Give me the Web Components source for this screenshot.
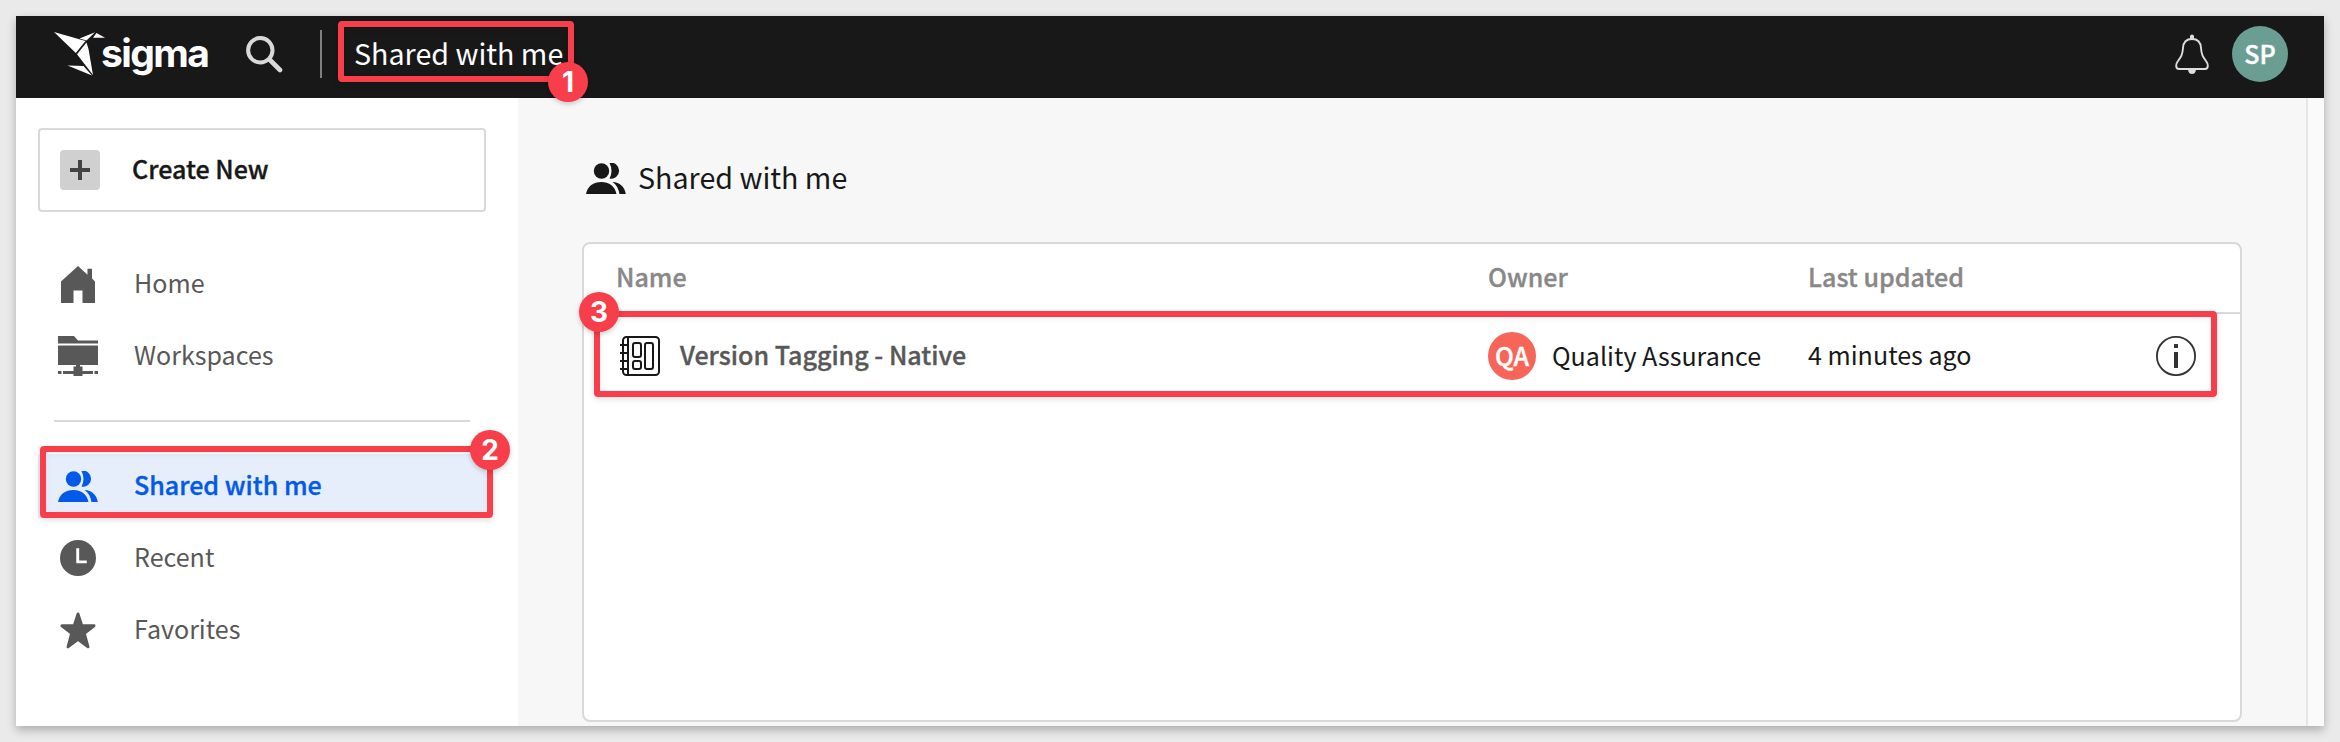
<!DOCTYPE html>
<html lang="en"><head><meta charset="utf-8"><title>Shared with me</title>
<style>
html,body{margin:0;height:100%;background:#eaeaea}
body{font-family:"Noto Sans CJK SC","Noto Sans",sans-serif;overflow:hidden}
</style></head><body>
<sigma-app></sigma-app>
<script>
const ICONS={
home:'<svg width="34" height="37" viewBox="0 0 34 37"><path fill="currentColor" d="M0 15.5 17 0 26.5 8.7V2.8H31V12.5L34 15.5V37H21.5V24.5H12.500V37H0Z"/></svg>',
folder:'<svg width="40" height="40" viewBox="0 0 40 40"><path fill="currentColor" d="M0 0H16L20 4.500H40V7.500H0ZM0 9.500H40V29H22V30.500H24.500V35H35V38H24.500V40H15.500V38H5V35H15.500V30.500H18V29H0ZM0 35H3.500V38H0ZM36.500 35H40V38H36.500Z"/></svg>',
people:'<svg width="40" height="31" viewBox="0 0 40 31"><circle cx="15.500" cy="8" r="7.700" fill="currentColor"/><path fill="currentColor" d="M23.500 0A7.700 8 0 1 1 23.500 15.500Q27.500 8 23.500 0ZM0 31C1.500 23 7.500 19 15.300 19S29 23 30.500 31ZM26.500 19C34 19.500 38.500 23.500 39.800 31H33.500C32.500 25.500 30.500 21.500 26.500 19Z"/></svg>',
clock:'<svg width="36" height="36" viewBox="0 0 37 37"><circle cx="18.500" cy="18.500" r="18.500" fill="currentColor"/><path d="M18.200 8.500V22.500H27.500" fill="none" stroke="#fff" stroke-width="3"/></svg>',
star:'<svg width="36" height="37" viewBox="0 0 37 38"><path fill="currentColor" stroke="currentColor" stroke-width="3" stroke-linejoin="round" d="M18.500 2 22.500 14.200H35L25 22 28.800 35.800 18.500 28 8.200 35.800 12 22 2 14.200H14.500Z"/></svg>',
book:'<svg width="40" height="40" viewBox="0 0 40 40" fill="none" stroke="currentColor" stroke-width="2"><rect x="3" y="1" width="36" height="38" rx="3.500"/><path d="M8 1V39M0 9H7M0 17H7M0 25H7M0 33H7"/><rect x="13" y="7" width="8" height="14" rx="2"/><rect x="13" y="25" width="8" height="8" rx="2"/><rect x="25" y="7" width="8" height="26" rx="2"/></svg>',
info:'<svg width="40" height="40" viewBox="0 0 40 40"><circle cx="20" cy="20" r="19.100" fill="none" stroke="currentColor" stroke-width="1.800"/><path fill="currentColor" d="M18 8H22V12H18ZM18 16H22V32H18Z"/></svg>',
plus:'<svg width="20" height="20" viewBox="0 0 20 20"><path d="M10 0V20M0 10H20" stroke="currentColor" stroke-width="4"/></svg>',
search:'<svg width="37" height="37" viewBox="0 0 37 37" fill="none" stroke="currentColor"><circle cx="14.300" cy="14.300" r="12.200" stroke-width="4"/><path d="M23.500 23.500 34 34" stroke-width="4.600" stroke-linecap="round"/></svg>',
bell:'<svg width="34" height="40" viewBox="0 0 34 40"><path d="M17 5C11 5 8.300 9 8 14C7.500 21 6 23 3 27C0 31 1 35 4 35H30C33 35 34 31 31 27C28 23 26.500 21 26 14C25.700 9 23 5 17 5Z" fill="none" stroke="currentColor" stroke-width="1.900"/><path fill="currentColor" d="M15 5V2.500A2 2 0 0 1 19 2.500V5ZM13 35.500H21Q20.500 40 17 40T13 35.500Z"/></svg>',
bird:'<svg width="51" height="44" viewBox="0 0 51 44"><path fill="currentColor" d="M0 0 31.500 9 21.800 21ZM25.500 6.500 41 .3 32.500 8.500ZM42.500 1 51 5.700H39ZM32.500 10.500 34.500 17 39 43 23 22.300ZM13.500 33.500 29.500 34 38 43.500Z"/></svg>'
};
function define(name,tpl,init){
  customElements.define(name,class extends HTMLElement{
    constructor(){super();this.attachShadow({mode:'open'})}
    connectedCallback(){this.shadowRoot.innerHTML=tpl;if(init)init(this,this.shadowRoot)}
  });
}
define('ui-icon','<style>:host{display:flex;flex:none;align-items:center;justify-content:center}svg{display:block}</style><div></div>',(el,r)=>{if(ICONS[el.getAttribute('name')])r.querySelector('div').innerHTML=ICONS[el.getAttribute('name')]});
define('step-badge','<style>:host{display:flex;align-items:center;justify-content:center;position:absolute;width:40px;height:40px;border-radius:50%;background:#f83e4b;color:#fff;font:700 28px/40px Inter,sans-serif;box-shadow:0 2px 5px #0003}</style><slot></slot>');
define('mark-frame','<style>:host{display:block;position:absolute;box-sizing:border-box;border:6px solid #f83e4b;border-radius:4px;box-shadow:0 2px 6px #0002,inset 0 2px 6px #0001}</style><slot></slot>');
define('user-avatar','<style>:host{display:flex;flex:none;align-items:center;justify-content:center;border-radius:50%;color:#fff;font-weight:500;-webkit-text-stroke:.4px}span{padding-bottom:3px}</style><span><slot></slot></span>');
define('nav-item',`<style>:host{display:flex;align-items:center;height:72px;color:#585858;font-size:25.07px;line-height:36px}
:host([active]){background:#e6eefb;color:#0359e8;font-weight:500;-webkit-text-stroke:.35px;height:64px;margin:4px 0}
div{width:40px;margin-left:20px;margin-right:36px}span{padding-bottom:5px}</style><div></div><span><slot></slot></span>`,(el,r)=>{r.querySelector('div').innerHTML='<ui-icon name="'+el.getAttribute('icon')+'"></ui-icon>'});
define('top-bar',`<style>:host{display:flex;align-items:center;height:82px;background:#181818;color:#fff;box-sizing:border-box;padding:0 36px 0 38px;position:relative}
.bird{margin-top:-6px}.brand{font:700 39px/40px Inter,sans-serif;letter-spacing:-1.6px;margin:-8px 0 0 -4px;width:112px;white-space:nowrap}
.search{color:#d9d9d9;margin:-5px 0 0 33px}.rule{width:2px;height:48px;background:#818181;margin:-6px 32px 0 37px}
.title{font-size:28.65px;line-height:40px;margin-top:-9px;flex:1}.bell{color:#ddd;margin:-6px 23px 0 0}
user-avatar{width:56px;height:56px;background:#6a9e93;font-size:25px;margin-top:-6px}
</style><ui-icon class="bird" name="bird"></ui-icon><div class="brand">sigma</div><ui-icon class="search" name="search"></ui-icon><div class="rule"></div><div class="title">Shared with me</div><ui-icon class="bell" name="bell"></ui-icon><user-avatar>SP</user-avatar>
<mark-frame style="left:322px;top:5px;width:236px;height:61px"></mark-frame><step-badge style="left:532px;top:46px">1</step-badge>`);
define('side-nav',`<style>:host{display:block;background:#fff;width:502px;flex:none;box-sizing:border-box;padding:30px 32px 0 22px;position:relative}
.create{display:flex;align-items:center;box-sizing:border-box;height:84px;border:2px solid #d9d9d9;border-radius:4px;margin-bottom:36px;color:#181818;font-size:25.07px;font-weight:500;-webkit-text-stroke:.35px;line-height:36px}
.create span{padding-bottom:5px}
.plus{width:40px;height:40px;border-radius:4px;background:#d0d0d0;color:#444;margin:0 32px 0 20px}
hr{border:0;height:2px;background:#d9d9d9;margin:28px 16px 32px}</style>
<div class="create"><ui-icon class="plus" name="plus"></ui-icon><span>Create New</span></div>
<nav-item icon="home">Home</nav-item><nav-item icon="folder">Workspaces</nav-item><hr>
<nav-item icon="people" active>Shared with me</nav-item><nav-item icon="clock">Recent</nav-item><nav-item icon="star">Favorites</nav-item>
<mark-frame style="left:24px;top:348px;width:453px;height:72px"></mark-frame><step-badge style="left:454px;top:332px">2</step-badge>`);
define('doc-table',`<style>:host{display:block;position:relative;box-sizing:border-box;width:1660px;height:480px;background:#fff;border:2px solid #d9d9d9;border-radius:8px;font-size:25.07px;line-height:36px;color:#181818}
.row{display:grid;grid-template-columns:872px 320px 1fr 40px;padding:0 44px 0 32px;align-items:center;height:68px}.row span{padding-bottom:4px}
.head{color:#888;font-weight:500;-webkit-text-stroke:.35px;border-bottom:2px solid #d9d9d9}.body{height:84px}.name{display:flex;align-items:center;gap:20px;font-weight:500;-webkit-text-stroke:.35px;color:#585858;margin-left:4px}
.name ui-icon{color:#181818}.owner{display:flex;align-items:center;gap:16px}.row .owner span{padding:0 0 2px}.row.body .name span,.row.body>span{padding-bottom:5px}user-avatar{width:48px;height:48px;background:#f66557;font-size:25px}.info{color:#333}
</style><div class="row head"><span>Name</span><span>Owner</span><span>Last updated</span><span></span></div>
<div class="row body"><div class="name"><ui-icon name="book"></ui-icon><span>Version Tagging - Native</span></div><div class="owner"><user-avatar>QA</user-avatar><span>Quality Assurance</span></div><span>4 minutes ago</span><ui-icon class="info" name="info"></ui-icon></div>
<mark-frame style="left:10px;top:67px;width:1623px;height:86px"></mark-frame><step-badge style="left:-5px;top:48px">3</step-badge>`);
define('main-panel',`<style>:host{display:block;flex:1;background:#f7f7f7;padding:60px 0 0 64px;border-right:2px solid #e6e6e6}
h1{display:flex;align-items:center;gap:12px;margin:0 0 44px 4px;height:40px;font-weight:400;font-size:28.65px;line-height:40px;color:#181818}h1 span{padding-bottom:3px}</style>
<h1><ui-icon name="people"></ui-icon><span>Shared with me</span></h1><doc-table></doc-table>`);
define('sigma-app',`<style>:host{display:flex;flex-direction:column;margin:16px;width:2308px;height:710px;background:#fafafa;box-shadow:0 4px 9px #0004}
.content{display:flex;flex:1;min-height:0}.gutter{width:16px;background:#fafafa}</style>
<top-bar></top-bar><div class="content"><side-nav></side-nav><main-panel></main-panel><div class="gutter"></div></div>`);
</script></body></html>
